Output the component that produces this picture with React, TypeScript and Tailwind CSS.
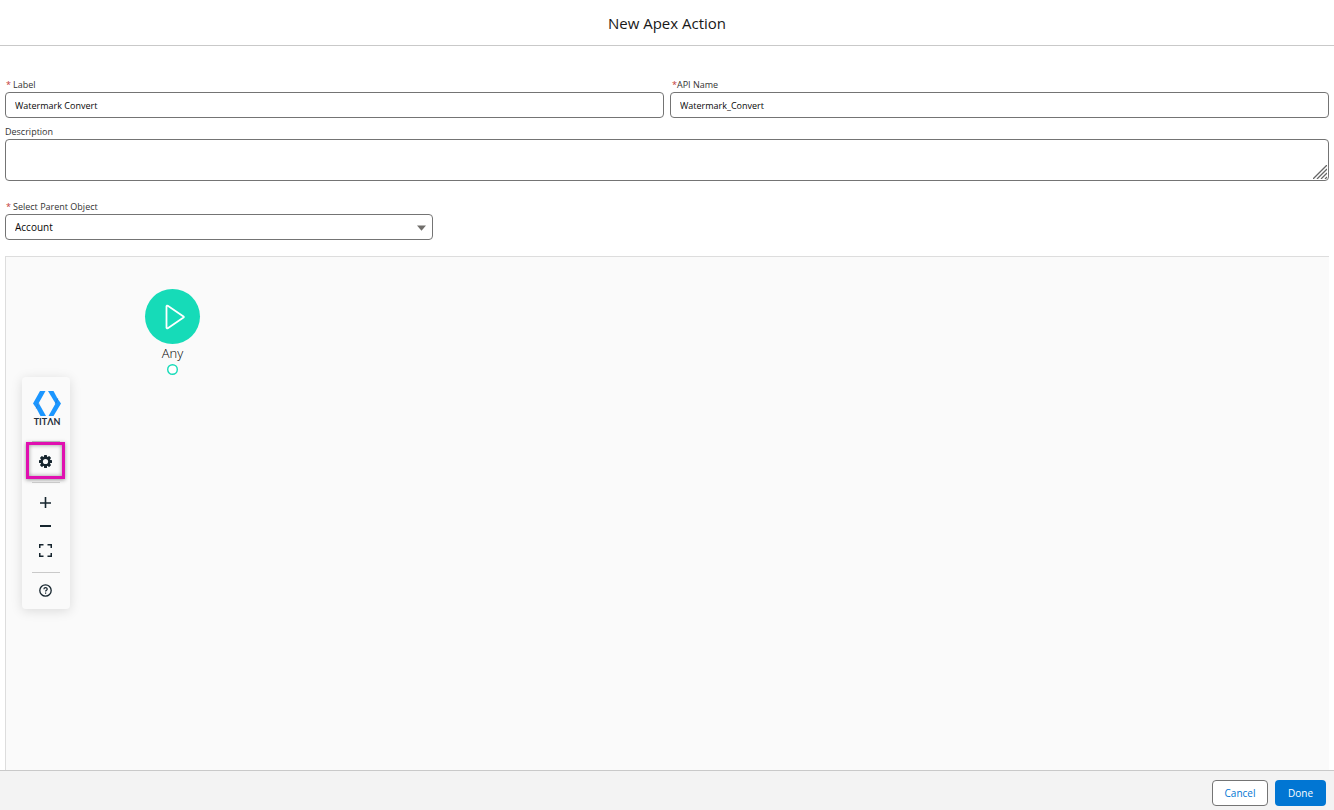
import { useState } from "react";
import type { ReactNode } from "react";

interface FieldLabelProps {
  htmlFor: string;
  required?: boolean;
  tight?: boolean;
  children: ReactNode;
}

function FieldLabel({ htmlFor, required, tight, children }: FieldLabelProps) {
  return (
    <label htmlFor={htmlFor} className="flex h-[14px] items-center text-[9px] leading-[12px] text-[#333333]">
      {required && (
        <span className={tight ? "pl-0.5 text-[#c23934]" : "pl-px pr-0.5 text-[#c23934]"}>*</span>
      )}
      {children}
    </label>
  );
}

const fieldClass =
  "block h-[26px] w-full rounded border border-[#747474] bg-white px-[9px] text-[#080707] outline-none";

function TitanLogo() {
  return (
    <div className="ml-0.5 flex flex-col items-center">
      <svg width="28" height="25" viewBox="0 0 28 25" aria-hidden="true">
        <path d="M7 0h5.500L5.500 12.500 3.500 17.500 0 12.500z" fill="#1b96ff" />
        <path d="M3.500 17.500 6 12.500 13 25H7.500z" fill="#1b96ff" />
        <path d="M15 0h5.500L24.500 7.500 22.500 12.500z" fill="#1b96ff" />
        <path d="M24.500 7.500 28 12.500 20.500 25H15.500l7-12.500z" fill="#1b96ff" />
        <path d="M3.300 17.500 5.800 12.300M24.700 7.500l-2.400 5.200" stroke="#0d6fd1" strokeWidth="0.8" />
      </svg>
      <span className="font-['Lato',sans-serif] text-[9px] leading-[12px] font-bold text-[#1f2f3a]">TITΛN</span>
    </div>
  );
}

function Toolbar() {
  const iconBtn = "flex h-6 w-full items-center justify-center pr-px text-[#16252e]";
  return (
    <div className="absolute top-[120px] left-4 flex w-12 flex-col items-center rounded bg-[#fafafa] pt-[14px] pb-[7px] shadow-[0_2px_12px_rgba(0,0,0,0.13)]">
      <TitanLogo />
      <hr className="mt-[13px] w-7 border-[#c9c9c9]" />
      <button
        type="button"
        aria-label="Settings"
        className="mr-px flex h-[37px] w-[39px] items-center justify-center border-3 border-[#e010b0] bg-[#fafafa] pt-0.5 shadow-[0_1px_4px_rgba(0,0,0,0.4),inset_0_0_4px_rgba(0,0,0,0.4)]"
      >
        <svg width="13" height="13" viewBox="0 0 13 13" aria-hidden="true">
          <g fill="#16252e">
            <rect x="5" y="0" width="3" height="13" rx="0.6" />
            <rect x="5" y="0" width="3" height="13" rx="0.6" transform="rotate(45 6.5 6.5)" />
            <rect x="5" y="0" width="3" height="13" rx="0.6" transform="rotate(90 6.5 6.5)" />
            <rect x="5" y="0" width="3" height="13" rx="0.6" transform="rotate(135 6.5 6.5)" />
            <circle cx="6.500" cy="6.500" r="5" />
          </g>
          <circle cx="6.500" cy="6.500" r="2.600" fill="#fafafa" />
        </svg>
      </button>
      <hr className="mt-[3px] mb-[7px] w-7 border-[#c9c9c9]" />
      <button type="button" aria-label="Zoom in" className={iconBtn}>
        <svg width="13" height="13" viewBox="0 0 13 13" aria-hidden="true">
          <path d="M1 7h11M6.500 1v11" stroke="currentColor" strokeWidth="1.600" />
        </svg>
      </button>
      <button type="button" aria-label="Zoom out" className={iconBtn}>
        <svg width="13" height="2" viewBox="0 0 13 2" aria-hidden="true">
          <path d="M1 1h11" stroke="currentColor" strokeWidth="2" />
        </svg>
      </button>
      <button type="button" aria-label="Fit to screen" className={iconBtn}>
        <svg width="13" height="13" viewBox="0 0 13 13" fill="none" aria-hidden="true">
          <path
            d="M.75 4V.75H4.500M8.500.75h3.750V4M12.250 9v3.250H8.500M4.500 12.250H.75V9"
            stroke="currentColor"
            strokeWidth="1.500"
          />
        </svg>
      </button>
      <hr className="mt-2.5 mb-[5px] w-7 border-[#c9c9c9]" />
      <button type="button" aria-label="Help" className={iconBtn}>
        <svg width="13" height="13" viewBox="0 0 13 13" fill="none" aria-hidden="true">
          <circle cx="6.500" cy="6.500" r="5.700" stroke="currentColor" strokeWidth="1.300" />
          <path
            d="M4.900 5.200c0-2 3.300-2 3.300 0 0 1.100-1.600 1.100-1.600 2.300M6.600 8.600v1.200"
            stroke="currentColor"
            strokeWidth="1.200"
          />
        </svg>
      </button>
    </div>
  );
}

function StartNode() {
  return (
    <div className="absolute top-8 left-[139px] flex w-[55px] flex-col items-center">
      <div className="flex h-[55px] w-[55px] items-center justify-center rounded-full bg-[#16dbb8]">
        <svg width="20" height="26" viewBox="0 0 20 26" className="ml-1" fill="none" aria-hidden="true">
          <path
            d="M1.500 2.200v21.600q.3 1 1.300.4L18.500 13.500q.7-.5 0-1L2.800 1.800q-1-.5-1.300.4z"
            stroke="#fff"
            strokeWidth="1.800"
          />
        </svg>
      </div>
      <span className="font-['Open_Sans',sans-serif] text-[13px] leading-[18px] font-light text-black">Any</span>
      <svg width="11" height="11" viewBox="0 0 11 11" className="mt-0.5" aria-hidden="true">
        <circle cx="5.500" cy="5.500" r="4.800" fill="#fff" stroke="#16dbb8" strokeWidth="1.400" />
      </svg>
    </div>
  );
}

export default function App() {
  const [label, setLabel] = useState("Watermark Convert");
  const [apiName, setApiName] = useState("Watermark_Convert");
  const [description, setDescription] = useState("");
  const [parent, setParent] = useState("Account");

  return (
    <div className="flex min-h-screen flex-col bg-white font-['Open_Sans','Noto_Sans',sans-serif]">
      <header className="flex h-[46px] items-center justify-center border-b border-[#c9c9c9]">
        <h1 className="text-[15px] leading-6 text-[#181818]">New Apex Action</h1>
      </header>

      <main className="flex flex-1 flex-col px-[5px] pt-8">
        <div className="grid grid-cols-2 gap-1.5">
          <div>
            <FieldLabel htmlFor="label" required>Label</FieldLabel>
            <input
              id="label"
              className={`${fieldClass} text-[9px]`}
              value={label}
              onChange={(e) => setLabel(e.target.value)}
            />
          </div>
          <div>
            <FieldLabel htmlFor="api-name" required tight>API Name</FieldLabel>
            <input
              id="api-name"
              className={`${fieldClass} text-[9px]`}
              value={apiName}
              onChange={(e) => setApiName(e.target.value)}
            />
          </div>
        </div>

        <div className="mt-[7px]">
          <FieldLabel htmlFor="description">Description</FieldLabel>
          <div className="relative">
            <textarea
              id="description"
              className="block h-[42px] w-full resize-none rounded border border-[#747474] bg-white px-[9px] py-1 text-[9px] outline-none"
              value={description}
              onChange={(e) => setDescription(e.target.value)}
            />
            <svg
              className="pointer-events-none absolute right-0.5 bottom-0.5"
              width="14"
              height="14"
              viewBox="0 0 14 14"
              aria-hidden="true"
            >
              <path d="M0 14 14 0M4 14 14 4M8 14l6-6M12 14l2-2" stroke="#666666" strokeWidth="1.300" />
            </svg>
          </div>
        </div>

        <div className="mt-[19px] w-[428px] max-w-full">
          <FieldLabel htmlFor="parent" required>Select Parent Object</FieldLabel>
          <div className="relative">
            <select
              id="parent"
              className={`${fieldClass} appearance-none text-[10px]`}
              value={parent}
              onChange={(e) => setParent(e.target.value)}
            >
              <option>Account</option>
            </select>
            <svg
              className="pointer-events-none absolute top-[11px] right-[7px]"
              width="9"
              height="6"
              viewBox="0 0 9 6"
              aria-hidden="true"
            >
              <path d="M0 .500h9L4.500 5.800z" fill="#706e6b" />
            </svg>
          </div>
        </div>

        <section
          aria-label="Flow canvas"
          className="relative mt-4 min-h-[400px] flex-1 border-t border-l border-[#dddddd] bg-[#fafafa]"
        >
          <StartNode />
          <Toolbar />
        </section>
      </main>

      <footer className="flex h-10 items-center justify-end gap-[7px] border-t border-[#c9c9c9] bg-[#f3f3f3] pt-[5px] pr-2">
        <button type="button" className="h-[26px] w-14 rounded border border-[#747474] bg-white text-[10px] text-[#0176d3]">
          Cancel
        </button>
        <button type="button" className="h-[26px] w-[51px] rounded bg-[#0176d3] text-[10px] text-white">
          Done
        </button>
      </footer>
    </div>
  );
}
